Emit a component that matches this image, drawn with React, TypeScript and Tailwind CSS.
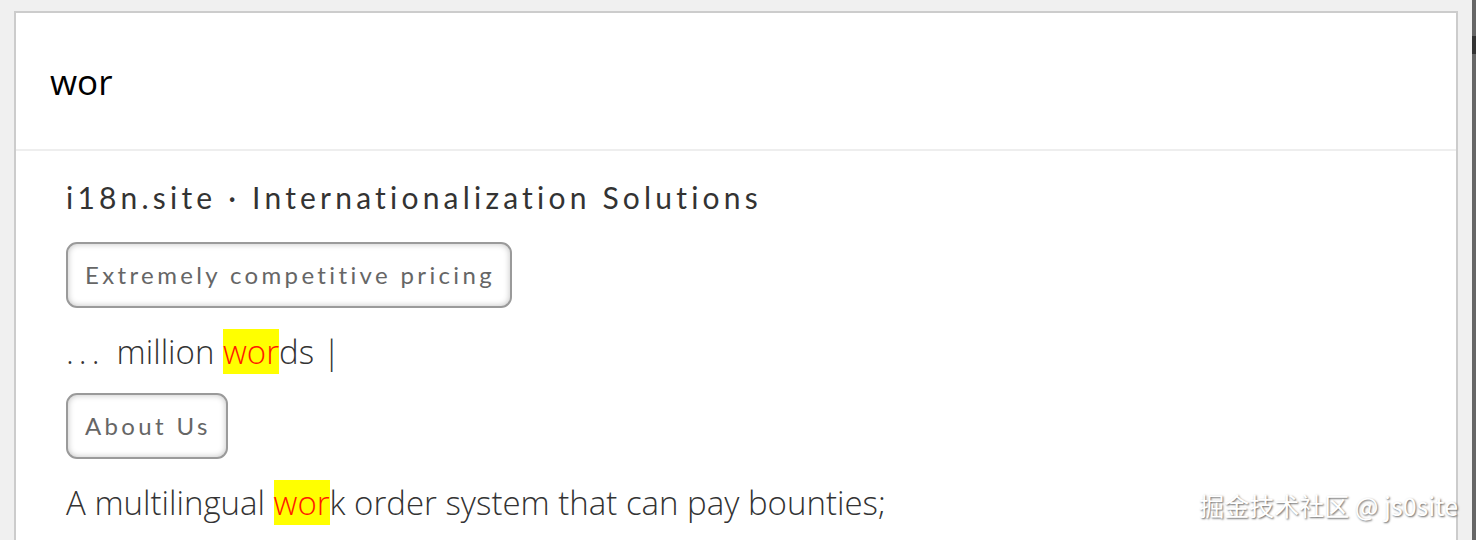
import React from "react";

function Hit({ children }: { children: React.ReactNode }) {
  return <span className="bg-[#ffff00] text-[#ff1a00]">{children}</span>;
}

function Tag({ label }: { label: string }) {
  return (
    <div className="inline-flex h-[66px] items-center rounded-[11px] border-2 border-[#9a9a9a] bg-white pl-[17px] pr-[15px] shadow-[inset_0_0_6px_rgba(0,0,0,0.25)]">
      <span className="font-['Lato',sans-serif] text-[24px] tracking-[0.14em] text-[#666]">
        {label}
      </span>
    </div>
  );
}

export default function App() {
  return (
    <div className="relative flex h-[540px] overflow-hidden bg-[#f0f0f0]">
      <div className="ml-[14px] mt-[11px] flex w-[1444px] flex-col border-x-2 border-t-2 border-[#cccccc] bg-white">
        <div className="flex h-[138px] items-center border-b-2 border-[#eeeeee] pl-[34px]">
          <span className="font-['Open_Sans',sans-serif] text-[35px] leading-none text-black">wor</span>
        </div>
        <div className="flex flex-col items-start pl-[50px] pt-[26px] text-[#333]">
          <h1 className="font-['Lato',sans-serif] text-[30px] leading-[40px] tracking-[0.14em] text-[#333]">
            i18n.site · Internationalization Solutions
          </h1>
          <div className="mt-[25px]">
            <Tag label="Extremely competitive pricing" />
          </div>
          <p className="mt-[24px] font-['Open_Sans',sans-serif] text-[33px] font-light leading-[40px]">
            <span className="mr-[12px] tracking-[5px]">...</span>million <Hit>wor</Hit>ds |
          </p>
          <div className="mt-[21px]">
            <Tag label="About Us" />
          </div>
          <p className="mt-[22px] font-['Open_Sans',sans-serif] text-[33px] font-light leading-[44px]">
            A multilingual <Hit>wor</Hit>k order system that can pay bounties;
          </p>
        </div>
      </div>
      <div className="ml-[14px] w-[4px] bg-[#666]">
        <div className="mt-[36px] h-[18px] bg-[#333]" />
      </div>
      <div className="absolute bottom-[16px] right-[18px] font-['Noto_Sans_CJK_SC',sans-serif] text-[25px] text-white [text-shadow:1px_1px_2px_#666]">
        掘金技术社区 @ js0site
      </div>
    </div>
  );
}
